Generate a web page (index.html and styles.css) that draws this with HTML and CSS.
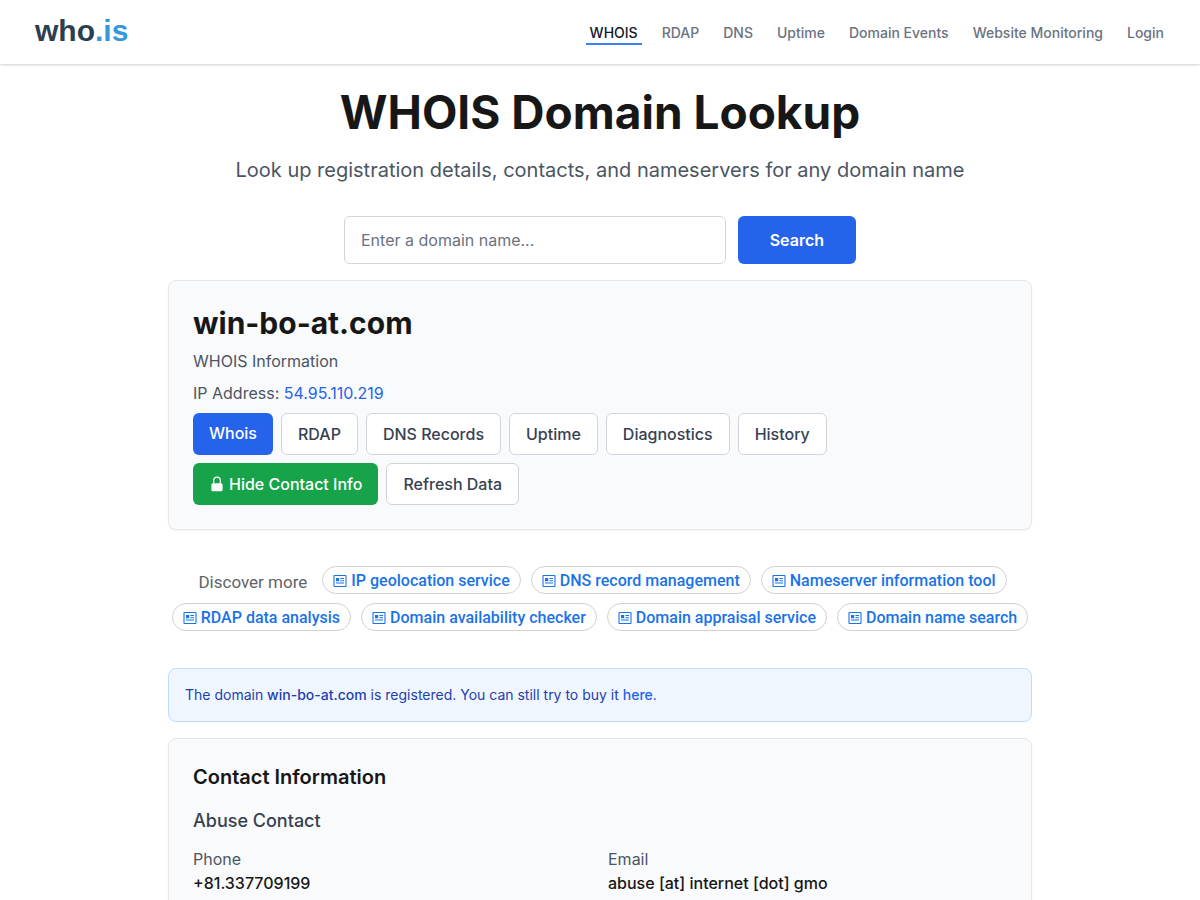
FILE: index.html
```html
<!DOCTYPE html>
<html lang="en">
<head>
    <meta charset="UTF-8">
    <meta name="viewport" content="width=device-width, initial-scale=1.0">
    <title>WHOIS Domain Lookup</title>
    <link rel="stylesheet" href="styles.css">
</head>
<body>
    <svg class="sprite" aria-hidden="true">
        <symbol id="icon-article" viewBox="0 0 14 14">
            <rect x="1" y="1.5" width="12" height="11" rx="0.4" fill="none" stroke="currentColor" stroke-width="1.1"/>
            <path d="M3 4h3.2v3.2H3zM7.4 4H11v1H7.4zM7.4 6.200H11v1H7.4zM3 8.600h8v1H3z" fill="currentColor"/>
        </symbol>
    </svg>

    <header class="header">
        <a href="/" class="logo">who<span class="logo-tld">.is</span></a>
        <nav class="nav">
            <a href="/whois" class="nav-link active">WHOIS</a>
            <a href="/rdap" class="nav-link">RDAP</a>
            <a href="/dns" class="nav-link">DNS</a>
            <a href="/uptime" class="nav-link">Uptime</a>
            <a href="/events" class="nav-link">Domain Events</a>
            <a href="/monitoring" class="nav-link">Website Monitoring</a>
            <a href="/login" class="nav-link">Login</a>
        </nav>
    </header>

    <main class="container">
        <section class="hero">
            <h1 class="hero-title">WHOIS Domain Lookup</h1>
            <p class="hero-subtitle">Look up registration details, contacts, and nameservers for any domain name</p>
            <form class="search">
                <input type="text" class="search-input" placeholder="Enter a domain name..." aria-label="Domain name">
                <button type="submit" class="search-btn">Search</button>
            </form>
        </section>

        <section class="card">
            <h2 class="domain-name">win-bo-at.com</h2>
            <p class="domain-meta">WHOIS Information</p>
            <p class="domain-meta">IP Address: <a href="/ip/54.95.110.219" class="link">54.95.110.219</a></p>
            <div class="actions">
                <a href="#whois" class="btn btn-primary">Whois</a>
                <a href="#rdap" class="btn">RDAP</a>
                <a href="#dns" class="btn">DNS Records</a>
                <a href="#uptime" class="btn">Uptime</a>
                <a href="#diagnostics" class="btn">Diagnostics</a>
                <a href="#history" class="btn">History</a>
                <button type="button" class="btn btn-success">
                    <svg class="lock-icon" viewBox="0 0 16 16" aria-hidden="true">
                        <path d="M4.700 7.500V4.500a3.300 3.300 0 0 1 6.600 0V7.500" fill="none" stroke="currentColor" stroke-width="1.200"/>
                        <rect x="2.400" y="7.200" width="11.200" height="8" rx="1.500" fill="currentColor"/>
                    </svg>
                    Hide Contact Info
                </button>
                <button type="button" class="btn">Refresh Data</button>
            </div>
        </section>

        <section class="discover">
            <span class="discover-label">Discover more</span>
            <a href="#" class="chip"><svg class="chip-icon"><use href="#icon-article"/></svg>IP geolocation service</a>
            <a href="#" class="chip"><svg class="chip-icon"><use href="#icon-article"/></svg>DNS record management</a>
            <a href="#" class="chip"><svg class="chip-icon"><use href="#icon-article"/></svg>Nameserver information tool</a>
            <a href="#" class="chip"><svg class="chip-icon"><use href="#icon-article"/></svg>RDAP data analysis</a>
            <a href="#" class="chip"><svg class="chip-icon"><use href="#icon-article"/></svg>Domain availability checker</a>
            <a href="#" class="chip"><svg class="chip-icon"><use href="#icon-article"/></svg>Domain appraisal service</a>
            <a href="#" class="chip"><svg class="chip-icon"><use href="#icon-article"/></svg>Domain name search</a>
        </section>

        <p class="notice">The domain <strong>win-bo-at.com</strong> is registered. You can still try to buy it <a href="#buy">here</a>.</p>

        <section class="card">
            <h2 class="card-title">Contact Information</h2>
            <h3 class="card-subtitle">Abuse Contact</h3>
            <dl class="contact">
                <div>
                    <dt>Phone</dt>
                    <dd>+81.337709199</dd>
                </div>
                <div>
                    <dt>Email</dt>
                    <dd>abuse [at] internet [dot] gmo</dd>
                </div>
            </dl>
        </section>
    </main>
</body>
</html>
```
FILE: styles.css
```css
* {
    margin: 0;
    padding: 0;
    box-sizing: border-box;
}

body {
    font-family: Inter, "Liberation Sans", sans-serif;
    font-size: 16px;
    line-height: 24px;
    color: #171717;
    background: #fff;
    overflow-x: hidden;
}

a {
    color: inherit;
    text-decoration: none;
}

button,
input {
    font: inherit;
}

.sprite {
    display: none;
}

/* Header */
.header {
    display: flex;
    align-items: center;
    justify-content: space-between;
    height: 64px;
    padding: 0 32px;
    box-shadow: 0 1px 3px rgba(0, 0, 0, 0.1), 0 1px 2px rgba(0, 0, 0, 0.1);
}

.logo {
    padding: 0 3px 3px;
    font-family: "Liberation Sans", Arial, sans-serif;
    font-size: 30px;
    font-weight: 700;
    line-height: 36px;
    color: #2c3e50;
}

.logo-tld {
    color: #3498db;
}

.nav {
    display: flex;
    gap: 16px;
}

.nav-link {
    padding: 4px 4px 0;
    border-bottom: 2px solid transparent;
    font-size: 14px;
    font-weight: 500;
    line-height: 20px;
    color: #6b7280;
}

.nav-link.active {
    color: #111827;
    border-color: #3b82f6;
}

.container {
    max-width: 896px;
    margin: 0 auto;
    padding: 24px 16px;
}

/* Hero */
.hero {
    text-align: center;
}

.hero-title {
    margin-bottom: 20px;
    font-size: 46px;
    font-weight: 700;
    line-height: 48px;
}

.hero-subtitle {
    font-size: 20px;
    line-height: 28px;
    color: #4b5563;
}

.search {
    display: flex;
    gap: 12px;
    max-width: 512px;
    margin: 32px auto 16px;
}

.search-input {
    flex: 1;
    min-width: 0;
    height: 48px;
    padding: 0 16px;
    border: 1px solid #d1d5db;
    border-radius: 6px;
    background: #fff;
}

.search-input::placeholder {
    color: #6b7280;
}

.search-btn {
    padding: 12px 32px;
    border: none;
    border-radius: 6px;
    background: #2563eb;
    color: #fff;
    font-weight: 600;
    cursor: pointer;
}

/* Cards */
.card {
    padding: 24px;
    border: 1px solid #e5e7eb;
    border-radius: 8px;
    background: #f9fafb;
    box-shadow: 0 1px 2px rgba(0, 0, 0, 0.05);
}

.domain-name {
    font-size: 30px;
    font-weight: 700;
    line-height: 36px;
}

.domain-meta {
    margin-top: 8px;
    color: #4b5563;
}

.link {
    color: #2563eb;
}

.actions {
    display: flex;
    flex-wrap: wrap;
    gap: 8px;
    margin-top: 8px;
}

.btn {
    padding: 8px 16px;
    border: 1px solid #d1d5db;
    border-radius: 6px;
    background: #fff;
    color: #374151;
    font-weight: 500;
    cursor: pointer;
}

.btn-primary,
.btn-success {
    border: none;
    color: #fff;
}

.btn-primary {
    background: #2563eb;
}

.btn-success {
    display: flex;
    align-items: center;
    gap: 4px;
    background: #16a34a;
}

.lock-icon {
    width: 16px;
    height: 16px;
}

/* Related searches */
.discover {
    display: flex;
    flex-wrap: wrap;
    align-items: center;
    justify-content: center;
    gap: 9px 10px;
    margin: 36px 0 37px;
    font-family: Roboto, sans-serif;
}

.discover-label {
    padding: 3px 5px 0;
    color: #5f6368;
    font-size: 17px;
}

.chip {
    display: flex;
    align-items: center;
    gap: 4px;
    height: 28px;
    padding: 2px 10px 0;
    border: 1px solid #d2d2d2;
    border-radius: 14px;
    color: #1a73e8;
    font-weight: 500;
}

.chip-icon {
    width: 14px;
    height: 14px;
}

.notice {
    margin-bottom: 16px;
    padding: 16px;
    border: 1px solid #bfdbfe;
    border-radius: 8px;
    background: #eff6ff;
    color: #1e40af;
    font-size: 14px;
    line-height: 20px;
}

.notice strong {
    font-weight: 500;
}

.notice a {
    color: #2563eb;
    font-weight: 500;
}

/* Contact details */
.card-title {
    margin-bottom: 16px;
    font-size: 20px;
    font-weight: 600;
    line-height: 28px;
}

.card-subtitle {
    margin-bottom: 12px;
    color: #374151;
    font-size: 18px;
    font-weight: 500;
    line-height: 28px;
}

.contact {
    display: grid;
    grid-template-columns: repeat(2, 1fr);
    gap: 16px;
}

.contact dt {
    color: #4b5563;
}

.contact dd {
    font-weight: 500;
}

@media (max-width: 768px) {
    .header {
        flex-direction: column;
        height: auto;
        padding: 12px 16px;
    }

    .nav {
        flex-wrap: wrap;
    }

    .contact {
        grid-template-columns: 1fr;
    }
}
```
